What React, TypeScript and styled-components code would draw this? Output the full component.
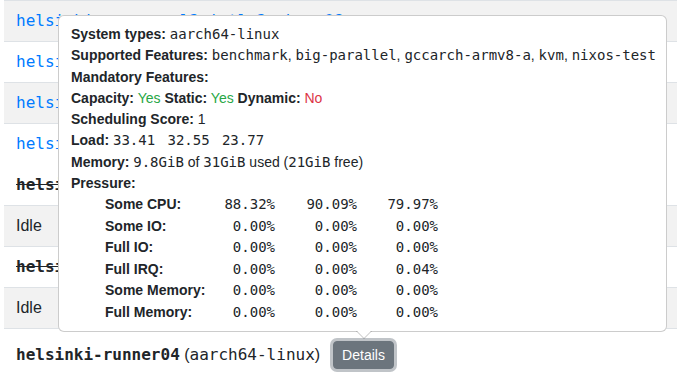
import React from "react";
import styled, {createGlobalStyle} from "styled-components";

const GlobalStyle = createGlobalStyle`
  body {
    margin: 0;
    background: #fff;
    color: #212529;
    font-family: "Liberation Sans", Arial, sans-serif;
    font-size: 16px;
  }
`;

const mono = `"DejaVu Sans Mono", "Liberation Mono", monospace`;

const Page = styled.div`
  position: relative;
  height: 378px;
  overflow: hidden;
  padding-left: 4px;
`;

const Row = styled.div<{ $striped?: boolean; $noBorder?: boolean; $tall?: boolean }>`
  display: flex;
  align-items: baseline;
  white-space: nowrap;
  box-sizing: border-box;
  padding: ${p => (p.$tall ? "12px" : "8px")} 12px 8px;
  line-height: 24px;
  border-top: 1px solid ${p => (p.$noBorder ? "transparent" : "#dee2e6")};
  background: ${p => (p.$striped ? "#f2f2f2" : "#fff")};
`;

const StepLink = styled.a`
  font-family: ${mono};
  color: #007bff;
  text-decoration: none;
`;

const MachineName = styled.span<{ $disabled?: boolean }>`
  font-family: ${mono};
  font-weight: bold;
  text-decoration: ${p => (p.$disabled ? "line-through" : "none")};
`;

const Mono = styled.span`
  font-family: ${mono};
`;

const DetailsButton = styled.button`
  margin-left: 13px;
  font-family: "Liberation Sans", Arial, sans-serif;
  font-size: 14px;
  line-height: 18px;
  padding: 4px 8px;
  color: #fff;
  background: #6c757d;
  border: 1px solid #6c757d;
  border-radius: 4px;
  box-shadow: 0 0 0 3px rgba(130, 138, 145, 0.5);
`;

const Popover = styled.div`
  position: absolute;
  left: 58px;
  top: 15px;
  width: 609px;
  box-sizing: border-box;
  padding: 8px 12px;
  background: #fff;
  border: 1px solid rgba(0, 0, 0, 0.2);
  border-radius: 6px;
  font-size: 14px;
  line-height: 21.3px;
  white-space: nowrap;

  &::before, &::after {
    content: "";
    position: absolute;
    left: 297px;
    border-style: solid;
    border-width: 8px 8px 0;
    border-color: transparent;
  }
  &::before {
    bottom: -8px;
    border-top-color: rgba(0, 0, 0, 0.25);
  }
  &::after {
    bottom: -7px;
    border-top-color: #fff;
  }
`;

const InfoLine = styled.div``;

const Label = styled.b``;

const Flag = styled.span<{ $ok: boolean }>`
  color: ${p => (p.$ok ? "#28a745" : "#dc3545")};
`;

const PressureGrid = styled.div`
  display: grid;
  grid-template-columns: 100px 70px 82px 81px;
  grid-auto-rows: 21.5px;
  margin-left: 34px;
`;

const PressureLabel = styled.b``;

const PressureValue = styled.span`
  font-family: ${mono};
  text-align: right;
`;

const features = ["benchmark", "big-parallel", "gccarch-armv8-a", "kvm", "nixos-test"];

const pressure: [string, string[]][] = [
    ["Some CPU:", ["88.32%", "90.09%", "79.97%"]],
    ["Some IO:", ["0.00%", "0.00%", "0.00%"]],
    ["Full IO:", ["0.00%", "0.00%", "0.00%"]],
    ["Full IRQ:", ["0.00%", "0.00%", "0.04%"]],
    ["Some Memory:", ["0.00%", "0.00%", "0.00%"]],
    ["Full Memory:", ["0.00%", "0.00%", "0.00%"]],
];

export default function App() {
    return (
        <Page>
            <GlobalStyle/>
            <Row $striped><StepLink href="#">helsinki-runners.l2.intl-2x-b.c-08</StepLink></Row>
            <Row><StepLink href="#">helsinki-runner01</StepLink></Row>
            <Row $striped><StepLink href="#">helsinki-runner02</StepLink></Row>
            <Row><StepLink href="#">helsinki-runner03</StepLink></Row>
            <Row $noBorder><MachineName $disabled>helsinki-old01</MachineName></Row>
            <Row $striped>Idle</Row>
            <Row><MachineName $disabled>helsinki-old02</MachineName></Row>
            <Row $striped>Idle</Row>
            <Row $tall>
                <MachineName>helsinki-runner04</MachineName>&nbsp;(<Mono>aarch64-linux</Mono>)
                <DetailsButton>Details</DetailsButton>
            </Row>

            <Popover>
                <InfoLine><Label>System types:</Label> <Mono>aarch64-linux</Mono></InfoLine>
                <InfoLine>
                    <Label>Supported Features:</Label>{" "}
                    {features.map((f, i) => (
                        <React.Fragment key={f}>
                            <Mono>{f}</Mono>{i < features.length - 1 ? ", " : ""}
                        </React.Fragment>
                    ))}
                </InfoLine>
                <InfoLine><Label>Mandatory Features:</Label></InfoLine>
                <InfoLine>
                    <Label>Capacity:</Label> <Flag $ok>Yes</Flag>{" "}
                    <Label>Static:</Label> <Flag $ok>Yes</Flag>{" "}
                    <Label>Dynamic:</Label> <Flag $ok={false}>No</Flag>
                </InfoLine>
                <InfoLine><Label>Scheduling Score:</Label> 1</InfoLine>
                <InfoLine>
                    <Label>Load:</Label> <Mono>33.41&nbsp;</Mono> <Mono>32.55&nbsp;</Mono> <Mono>23.77</Mono>
                </InfoLine>
                <InfoLine>
                    <Label>Memory:</Label> <Mono>9.8GiB</Mono> of <Mono>31GiB</Mono> used (<Mono>21GiB</Mono> free)
                </InfoLine>
                <InfoLine><Label>Pressure:</Label></InfoLine>
                <PressureGrid>
                    {pressure.map(([name, vals]) => (
                        <React.Fragment key={name}>
                            <PressureLabel>{name}</PressureLabel>
                            {vals.map((v, i) => <PressureValue key={i}>{v}</PressureValue>)}
                        </React.Fragment>
                    ))}
                </PressureGrid>
            </Popover>
        </Page>
    );
}
